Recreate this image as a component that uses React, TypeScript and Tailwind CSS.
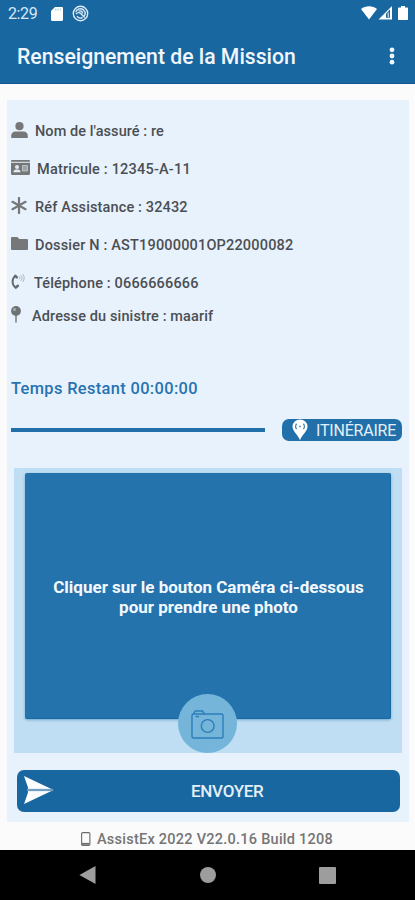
import type { ReactNode } from "react";

const PersonIcon = () => (
  <svg width="17" height="16" viewBox="0 0 17 16" fill="#757779">
    <circle cx="8.5" cy="4.2" r="4.1" />
    <path d="M0.2 16v-2.2c0-2.7 1.8-4.3 4.3-4.3h8c2.5 0 4.3 1.6 4.3 4.3V16z" />
  </svg>
);

const CardIcon = () => (
  <svg width="19" height="15" viewBox="0 0 19 15">
    <path d="M1.2 0h16.6c.7 0 1.2.5 1.2 1.2v12.6c0 .7-.5 1.2-1.2 1.2H1.2C.5 15 0 14.5 0 13.8V1.2C0 .5.5 0 1.2 0z" fill="#757779" />
    <path d="M0 2.3h19" stroke="#dfe8f0" strokeWidth="1.1" />
    <circle cx="6" cy="6.9" r="2" fill="#e3ebf2" />
    <path d="M2.4 12.3c0-1.9 1.2-2.8 2.6-2.8h2c1.4 0 2.6.9 2.6 2.8z" fill="#e3ebf2" />
    <path d="M11.5 5.5h5V11h-5z" fill="#9da2a6" stroke="#c3cbd2" strokeWidth=".8" />
  </svg>
);

const AsteriskIcon = () => (
  <svg width="16" height="17" viewBox="0 0 16 17" stroke="#757779" strokeWidth="2.2" strokeLinecap="round">
    <path d="M8 1v15M1.5 4.8l13 7.4M14.5 4.8l-13 7.4" />
  </svg>
);

const FolderIcon = () => (
  <svg width="17" height="13" viewBox="0 0 17 13" fill="#757779">
    <path d="M1.3 0h5l2 2h7.4c.8 0 1.3.5 1.3 1.3v8.4c0 .8-.5 1.3-1.3 1.3H1.3C.5 13 0 12.5 0 11.7V1.3C0 .5.5 0 1.3 0z" />
  </svg>
);

const PhoneIcon = () => (
  <svg width="14" height="17" viewBox="0 0 14 17" fill="none" strokeLinecap="round">
    <path d="M4.3 3C.4 6 .8 12 4.8 14.6" stroke="#65696d" strokeWidth="1.9" />
    <path d="M4.3 2.7l1.5 1.7M4.8 14.5l2.1-1.7" stroke="#65696d" strokeWidth="2.4" />
    <path d="M8.2 3.6c.8.7.8 2 0 2.7M10 2.4c1.4 1.4 1.4 3.7 0 5.1M11.8 1.2c1.9 2.2 1.9 5.3 0 7.5" stroke="#b0b8bf" strokeWidth="1" />
  </svg>
);

const PinIcon = () => (
  <svg width="10" height="17" viewBox="0 0 10 17">
    <path d="M5 9v6.8" stroke="#85898d" strokeWidth="1.7" strokeLinecap="round" />
    <circle cx="5" cy="5" r="4.9" fill="#707376" />
    <circle cx="3.5" cy="3.5" r="1.5" fill="#a9aeb2" />
  </svg>
);

interface InfoRowProps {
  icon: ReactNode;
  text: string;
  className: string;
  textClassName: string;
}

const InfoRow = ({ icon, text, className, textClassName }: InfoRowProps) => (
  <div className={`flex items-center ${className}`}>
    <span className="flex shrink-0 pb-[3px]">{icon}</span>
    <span className={`whitespace-nowrap pt-[2px] text-[14.5px] leading-5 font-medium text-[#4b4f53] ${textClassName}`}>{text}</span>
  </div>
);

const StatusBar = () => (
  <div className="flex h-[27px] items-center justify-between pr-[7px] pl-2 text-white">
    <div className="flex items-center">
      <span className="w-[42px] pt-px text-[16px] leading-5 tracking-[-0.4px] text-[#d7e8f5]">2:29</span>
      <svg width="12" height="14" viewBox="0 0 12 14" className="mr-[9px] ml-[1px]" fill="white">
        <path d="M4 0h6.8C11.5 0 12 .5 12 1.2v11.6c0 .7-.5 1.2-1.2 1.2H1.2C.5 14 0 13.5 0 12.8V4z" />
        <path d="M4.8 1.5v2M7 1.5v2M9.3 1.5v2" stroke="#8db9d9" strokeWidth=".8" />
      </svg>
      <svg width="17" height="17" viewBox="0 0 17 17" fill="none" stroke="#dcebf6">
        <circle cx="8.5" cy="8.5" r="7.2" strokeWidth="1.4" />
        <path d="M3.8 7c.8-3.2 5-4.4 7.7-2.1 1.9 1.7 2 4.3.7 6M12.7 12.5L8.5 8.2c-1.6-1-3.3-.6-4.7.7M5 11.2c1.4 1.9 3.8 2.2 5.6 1.3M6.5 6.2c1.9-.9 4.1.2 4.2 2.3" strokeWidth="1.4" />
      </svg>
    </div>
    <svg width="47" height="15" viewBox="0 0 47 15" fill="white">
      <path d="M0 3C4.4-.7 11.6-.7 16 3L8 13.5z" />
      <path d="M17.5 13.5L31 0v13.5z" />
      <path d="M25 7.8l4-4.3v8.3h-4z" fill="#1967a0" />
      <path d="M27.2 6.5v4.8" stroke="white" strokeWidth="1" />
      <path d="M40 0h4v1.4h2.3c.4 0 .7.3.7.7v11.2c0 .4-.3.7-.7.7h-8.6c-.4 0-.7-.3-.7-.7V2.1c0-.4.3-.7.7-.7H40z" />
    </svg>
  </div>
);

const App = () => {
  return (
    <div className="flex h-[900px] w-[415px] flex-col overflow-hidden bg-[#fbfbfc] font-['Roboto',sans-serif]">
      <header className="h-[84px] shrink-0 border-b border-[#11538f] bg-[#1967a0]">
        <StatusBar />
        <div className="flex h-[58px] items-center justify-between pr-[20px] pl-[17px]">
          <h1 className="whitespace-nowrap pt-px text-[21.2px] font-medium text-[#f1f7fc]">Renseignement de la Mission</h1>
          <svg width="6" height="18" viewBox="0 0 6 18" fill="#f1f7fc" className="-mt-px">
            <circle cx="3" cy="2.8" r="2.4" />
            <circle cx="3" cy="9" r="2.4" />
            <circle cx="3" cy="15.2" r="2.4" />
          </svg>
        </div>
      </header>

      <main className="mt-4 ml-[7px] flex h-[722px] w-[402px] shrink-0 flex-col bg-[#e8f2fd] pt-3">
        <InfoRow icon={<PersonIcon />} text="Nom de l'assuré : re" className="h-[38px] pl-[4px]" textClassName="ml-[7px] tracking-[0.07px]" />
        <InfoRow icon={<CardIcon />} text="Matricule : 12345-A-11" className="h-[38px] pl-[4px]" textClassName="ml-[7px] tracking-[0.2px]" />
        <InfoRow icon={<AsteriskIcon />} text="Réf Assistance : 32432" className="h-[38px] pl-[4px]" textClassName="ml-[8px] tracking-[0.14px]" />
        <InfoRow icon={<FolderIcon />} text="Dossier N : AST19000001OP22000082" className="h-[38px] pl-[4px]" textClassName="ml-[7px] tracking-[0.18px]" />
        <InfoRow icon={<PhoneIcon />} text="Téléphone : 0666666666" className="h-[38px] pl-[4px]" textClassName="ml-[9px] tracking-[0.16px]" />
        <InfoRow icon={<PinIcon />} text="Adresse du sinistre : maarif" className="h-[28px] pl-[4px]" textClassName="ml-[11px] tracking-[0.12px]" />

        <p className="mt-12 ml-[4px] pt-px text-[16.4px] leading-5 font-medium tracking-[0.36px] text-[#2772b0]">Temps Restant 00:00:00</p>

        <div className="mt-[20px] flex h-[22px] items-center pl-1">
          <div className="h-1 w-[254px] bg-[#2170a9]" />
          <button type="button" className="ml-[17px] flex h-[22px] w-[120px] items-center rounded-[7px] bg-[#2170a9] pl-[10px]">
            <svg width="16" height="22" viewBox="0 0 16 22" className="shrink-0">
              <path d="M8 21.3C6.2 15.5.5 12.7.5 7.5a7.5 7 0 0 1 15 0C15.5 12.7 9.8 15.5 8 21.3z" fill="white" />
              <path d="M4.7 4.8c-1.5 1.4-1.5 3.9 0 5.3M11.3 4.8c1.5 1.4 1.5 3.9 0 5.3" stroke="#4384b5" strokeWidth="1.3" fill="none" />
              <path d="M7.2 7.5h1.6" stroke="#4384b5" strokeWidth="1.5" />
            </svg>
            <span className="ml-[8px] whitespace-nowrap pt-[2px] text-[16px] leading-5 tracking-[-0.2px] text-[#e4f0f9]">ITINÉRAIRE</span>
          </button>
        </div>

        <section className="relative mt-[27px] ml-[7px] h-[285px] w-[388px] bg-[#bfdef3] pt-[5px] pl-[11px]">
          <div className="flex h-[246px] w-[366px] items-center justify-center rounded-[2px] border-r border-b border-[#176aa3] bg-[#2573ad] pt-[2px] pl-[2px] text-center text-[17px] leading-[20px] font-bold text-[#f3f9fe] shadow-[0_1px_3px_#72a7ce]">
            <p className="whitespace-nowrap">
              Cliquer sur le bouton Caméra ci-dessous
              <br />
              pour prendre une photo
            </p>
          </div>
          <button type="button" aria-label="Caméra" className="absolute top-[226px] left-[164px] flex size-[59px] items-center justify-center rounded-full bg-[#75b5da]">
            <svg width="33" height="29" viewBox="0 0 33 29" fill="none" stroke="#2d7db7" strokeWidth="1.4" className="mt-[1px]">
              <rect x="1" y="4" width="31" height="24" rx="1.5" />
              <path d="M2.5 4l1.7-3h7.3l2 3M4.500 6.500h3.500" />
              <circle cx="16.7" cy="16" r="6.4" />
            </svg>
          </button>
        </section>

        <button type="button" className="mt-[17px] ml-[10px] flex h-[42px] w-[383px] shrink-0 items-center rounded-[7px] bg-[#1967a0] pl-[7px]">
          <svg width="30" height="28" viewBox="0 0 30 29" className="mb-[2px] shrink-0" preserveAspectRatio="none">
            <path d="M0 0l29.5 14.5L0 29l4-12v-5z" fill="white" />
            <path d="M3 14.5h26" stroke="#719fc4" strokeWidth="2.4" />
          </svg>
          <span className="ml-[137px] text-[17px] leading-5 font-medium tracking-[-0.3px] text-[#e4f0f9]">ENVOYER</span>
        </button>
      </main>

      <footer className="flex h-[28px] shrink-0 items-center pt-[7px] pl-[81px]">
        <svg width="10" height="14" viewBox="0 0 10 14" fill="none" stroke="#6c6c6c" className="mb-[2px]">
          <rect x=".6" y=".6" width="8.3" height="12.8" rx="1.2" strokeWidth="1.1" />
          <path d="M1 11.8h7.5" strokeWidth="1.8" />
        </svg>
        <span className="ml-[6px] whitespace-nowrap pt-px text-[14.5px] leading-5 font-medium tracking-[0.25px] text-[#757575]">AssistEx 2022 V22.0.16 Build 1208</span>
      </footer>

      <nav className="flex h-[50px] shrink-0 items-center bg-black pl-[79px]">
        <svg width="17" height="18" viewBox="0 0 17 18" fill="#9d9d9d">
          <path d="M.4 9L16.5 0v18z" />
        </svg>
        <div className="ml-[104px] size-4 rounded-full bg-[#9d9d9d]" />
        <div className="ml-[103px] size-[17px] rounded-[1px] bg-[#9d9d9d]" />
      </nav>
    </div>
  );
};

export default App;
